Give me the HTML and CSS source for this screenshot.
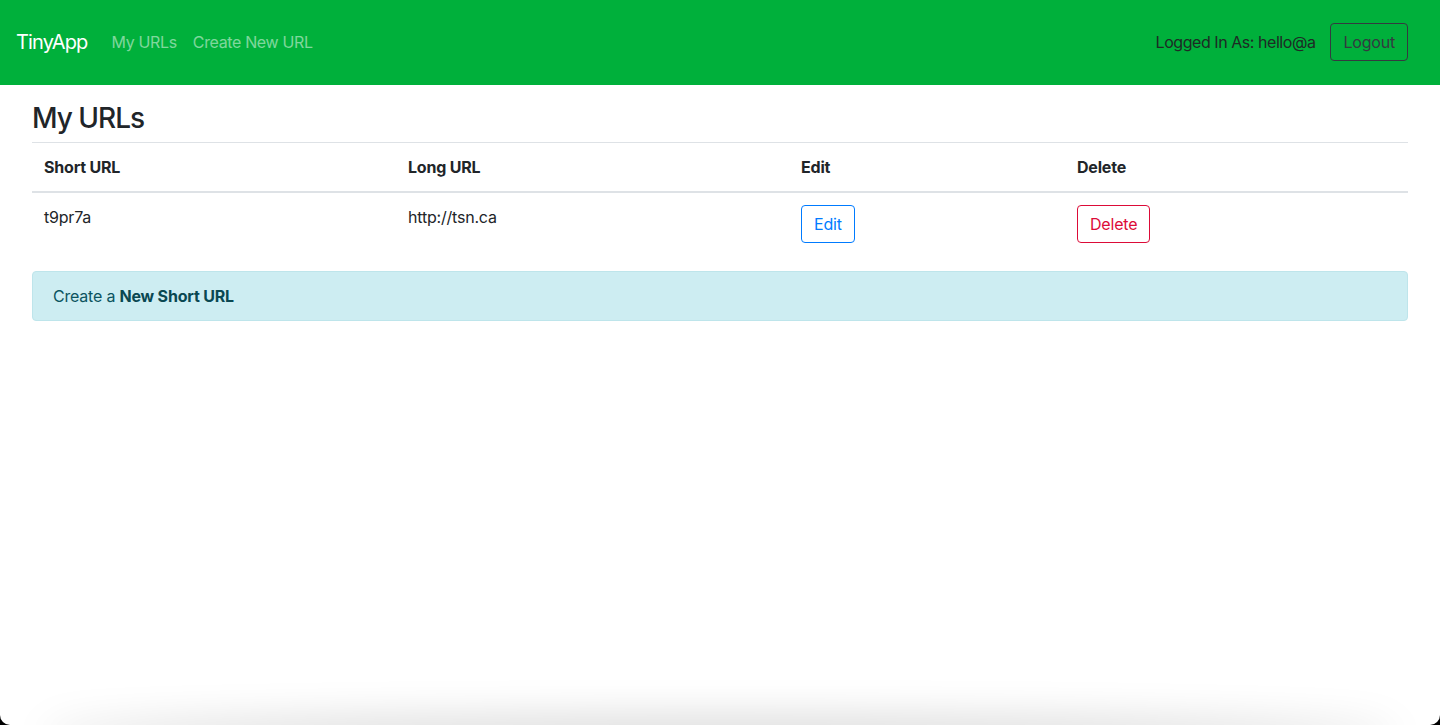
FILE: index.html
```html
<!DOCTYPE html>
<html lang="en">
<head>
<meta charset="utf-8">
<title>TinyApp</title>
<link rel="stylesheet" href="styles.css">
</head>
<body>
<div class="window">
  <nav class="navbar">
    <div class="nav-left">
      <a class="brand" href="#">TinyApp</a>
      <a class="nav-link" href="#">My URLs</a>
      <a class="nav-link" href="#">Create New URL</a>
    </div>
    <div class="nav-right">
      <span class="user">Logged In As: hello@a</span>
      <button class="btn btn-dark-outline">Logout</button>
    </div>
  </nav>
  <main class="main">
    <h3 class="title">My URLs</h3>
    <table class="table">
      <thead>
        <tr>
          <th class="c1">Short URL</th>
          <th class="c2">Long URL</th>
          <th class="c3">Edit</th>
          <th class="c4">Delete</th>
        </tr>
      </thead>
      <tbody>
        <tr>
          <td>t9pr7a</td>
          <td>http://tsn.ca</td>
          <td><button class="btn btn-primary-outline">Edit</button></td>
          <td><button class="btn btn-danger-outline">Delete</button></td>
        </tr>
      </tbody>
    </table>
    <div class="alert">Create a <a href="#" class="alert-link">New Short URL</a></div>
  </main>
</div>
</body>
</html>
```

FILE: styles.css
```css
html {
  background: #000;
}
body {
  margin: 0;
  font-family: "Inter", "Liberation Sans", sans-serif;
  font-size: 16px;
  line-height: 1.5;
  color: #212529;
}
.window {
  position: relative;
  height: 725px;
  background: #fff;
  border-radius: 0 0 10px 10px;
  overflow: hidden;
}
.window::after {
  content: "";
  position: absolute;
  left: 40px;
  right: 40px;
  bottom: -30px;
  height: 30px;
  box-shadow: 0 -6px 40px rgba(0, 0, 0, 0.18);
  border-radius: 50%;
}
.navbar {
  height: 85px;
  background: #00b03b;
  display: flex;
  align-items: center;
  justify-content: space-between;
  padding: 0 32px 2px 16px;
  box-sizing: border-box;
}
.nav-left {
  display: flex;
  align-items: center;
}
.brand {
  color: #fff;
  font-size: 20px;
  text-decoration: none;
  margin-right: 16px;
  letter-spacing: -0.85px;
}
.nav-link {
  color: rgba(255, 255, 255, 0.5);
  text-decoration: none;
  padding: 0 8px;
  letter-spacing: -0.35px;
}
.nav-right {
  display: flex;
  align-items: center;
  gap: 15px;
}
.user {
  color: #1e2a25;
  letter-spacing: -0.45px;
}
.btn {
  font-family: inherit;
  font-size: 16px;
  line-height: 24px;
  padding: 6px 12px;
  border-radius: 4px;
  background: transparent;
  cursor: pointer;
  letter-spacing: -0.2px;
}
.btn-dark-outline {
  border: 1px solid #343a40;
  color: #343a40;
}
.btn-primary-outline {
  border: 1px solid #007bff;
  color: #007bff;
}
.btn-danger-outline {
  border: 1px solid #dc0b38;
  color: #dc0b38;
}
.main {
  padding: 17px 32px 0;
}
.title {
  font-size: 28px;
  font-weight: 500;
  line-height: 1.2;
  margin: 0 0 6px;
  letter-spacing: -1px;
}
.table {
  width: 100%;
  border-collapse: collapse;
  margin-bottom: 16px;
}
.table th,
.table td {
  text-align: left;
  vertical-align: top;
  padding: 12px;
  border-top: 1px solid #dee2e6;
  letter-spacing: -0.2px;
}
.table th {
  font-weight: 700;
  border-bottom: 2px solid #dee2e6;
}
.table td {
  border-top: none;
}
.c1 { width: 340px; }
.c2 { width: 369px; }
.c3 { width: 252px; }
.alert {
  background: #cdedf2;
  border: 1px solid #bee5eb;
  color: #0c5460;
  border-radius: 4px;
  padding: 12px 20px;
  letter-spacing: -0.2px;
}
.alert-link {
  color: #0a4852;
  font-weight: 700;
  text-decoration: none;
}
```
